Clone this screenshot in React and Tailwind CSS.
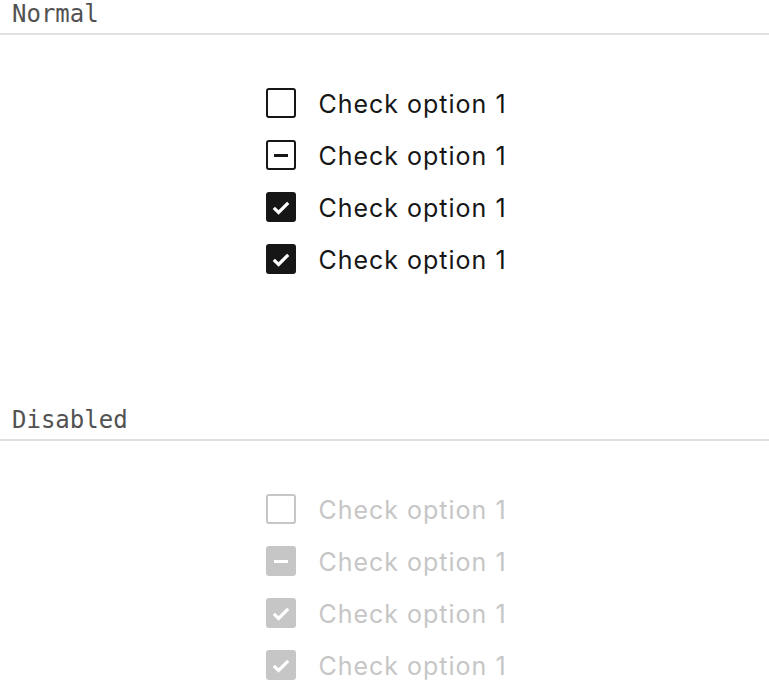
import React from "react";

const Box = ({ state, disabled }) => {
  const filledBg = disabled ? "bg-[#c6c6c6] border-[#c6c6c6]" : "bg-[#161616] border-[#161616]";
  if (state === "empty") {
    return (
      <span
        className={`block w-[30px] h-[30px] rounded-[3px] border-2 ${
          disabled ? "border-[#c6c6c6]" : "border-[#161616]"
        } bg-white`}
      />
    );
  }
  if (state === "indeterminate") {
    if (disabled) {
      return (
        <span className={`flex items-center justify-center w-[30px] h-[30px] rounded-[3px] border-2 ${filledBg}`}>
          <span className="block w-[14px] h-[3px] bg-white" />
        </span>
      );
    }
    return (
      <span className="flex items-center justify-center w-[30px] h-[30px] rounded-[3px] border-2 border-[#161616] bg-white">
        <span className="block w-[14px] h-[3px] bg-[#161616]" />
      </span>
    );
  }
  return (
    <span className={`relative block w-[30px] h-[30px] rounded-[3px] border-2 ${filledBg}`}>
      <svg className="absolute -left-[2px] -top-[2px]" width="30" height="30" viewBox="0 0 30 30" fill="none">
        <path d="M7.8 15.8 L12.6 20.4 L22.2 10.8" stroke="white" strokeWidth="3.2" strokeLinecap="butt" strokeLinejoin="miter" />
      </svg>
    </span>
  );
};

const Row = ({ state, disabled }) => (
  <div className="flex items-center h-[52px] gap-[22px]">
    <Box state={state} disabled={disabled} />
    <span
      className={`text-[25px] leading-none tracking-[1px] pt-[2px] ${disabled ? "text-[#c6c6c6]" : "text-[#161616]"}`}
      style={{ fontFamily: "Inter, 'Noto Sans', sans-serif" }}
    >
      Check option 1
    </span>
  </div>
);

const Section = ({ title, disabled }) => (
  <section className="h-[406px]">
    <div
      className="h-[35px] pl-[12px] border-b-2 border-[#e0e0e0] text-[24px] leading-[28px] text-[#525252]"
      style={{ fontFamily: "'DejaVu Sans Mono', 'Liberation Mono', monospace" }}
    >
      {title}
    </div>
    <div className="flex justify-center pt-[42px] pl-[4px]">
      <div className="flex flex-col">
        <Row state="empty" disabled={disabled} />
        <Row state="indeterminate" disabled={disabled} />
        <Row state="checked" disabled={disabled} />
        <Row state="checked" disabled={disabled} />
      </div>
    </div>
  </section>
);

export default function App() {
  return (
    <div className="w-[769px] h-[681px] overflow-hidden bg-white">
      <Section title="Normal" />
      <Section title="Disabled" disabled />
    </div>
  );
}
